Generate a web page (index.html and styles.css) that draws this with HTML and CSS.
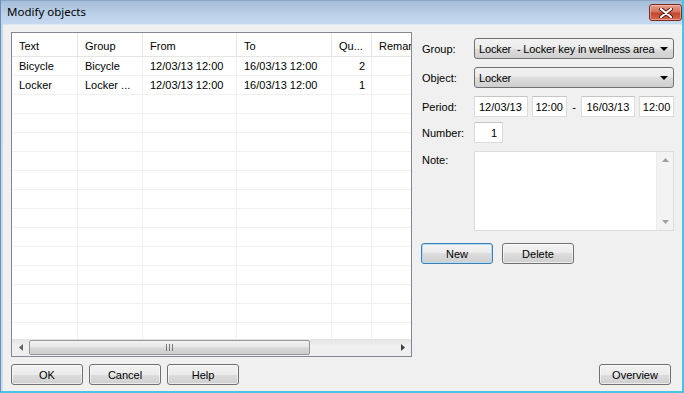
FILE: index.html
```html
<!DOCTYPE html>
<html lang="en">
<head>
    <meta charset="UTF-8">
    <title>Modify objects</title>
    <link rel="stylesheet" href="styles.css">
</head>
<body>
    <div class="window">
        <div class="titlebar">
            <span class="title">Modify objects</span>
            <div class="close-btn">
                <svg width="14" height="10" viewBox="0 0 14 10">
                    <path d="M2 1 L12 9 M12 1 L2 9" stroke="#5a1a10" stroke-width="4" stroke-linecap="round"/>
                    <path d="M2 1 L12 9 M12 1 L2 9" stroke="#ffffff" stroke-width="2.2" stroke-linecap="round"/>
                </svg>
            </div>
        </div>

        <div class="client">
            <div class="main">
                <!-- list of booked objects -->
                <div class="listview">
                    <div class="lv-body">
                        <div class="lv-row lv-head">
                            <div class="cell">Text</div>
                            <div class="cell">Group</div>
                            <div class="cell">From</div>
                            <div class="cell">To</div>
                            <div class="cell">Qu...</div>
                            <div class="cell">Remar</div>
                        </div>
                        <div class="lv-row">
                            <div class="cell">Bicycle</div>
                            <div class="cell">Bicycle</div>
                            <div class="cell">12/03/13 12:00</div>
                            <div class="cell">16/03/13 12:00</div>
                            <div class="cell num">2</div>
                            <div class="cell"></div>
                        </div>
                        <div class="lv-row">
                            <div class="cell">Locker</div>
                            <div class="cell">Locker ...</div>
                            <div class="cell">12/03/13 12:00</div>
                            <div class="cell">16/03/13 12:00</div>
                            <div class="cell num">1</div>
                            <div class="cell"></div>
                        </div>
                        <div class="lv-row"><div class="cell"></div><div class="cell"></div><div class="cell"></div><div class="cell"></div><div class="cell"></div><div class="cell"></div></div>
                        <div class="lv-row"><div class="cell"></div><div class="cell"></div><div class="cell"></div><div class="cell"></div><div class="cell"></div><div class="cell"></div></div>
                        <div class="lv-row"><div class="cell"></div><div class="cell"></div><div class="cell"></div><div class="cell"></div><div class="cell"></div><div class="cell"></div></div>
                        <div class="lv-row"><div class="cell"></div><div class="cell"></div><div class="cell"></div><div class="cell"></div><div class="cell"></div><div class="cell"></div></div>
                        <div class="lv-row"><div class="cell"></div><div class="cell"></div><div class="cell"></div><div class="cell"></div><div class="cell"></div><div class="cell"></div></div>
                        <div class="lv-row"><div class="cell"></div><div class="cell"></div><div class="cell"></div><div class="cell"></div><div class="cell"></div><div class="cell"></div></div>
                        <div class="lv-row"><div class="cell"></div><div class="cell"></div><div class="cell"></div><div class="cell"></div><div class="cell"></div><div class="cell"></div></div>
                        <div class="lv-row"><div class="cell"></div><div class="cell"></div><div class="cell"></div><div class="cell"></div><div class="cell"></div><div class="cell"></div></div>
                        <div class="lv-row"><div class="cell"></div><div class="cell"></div><div class="cell"></div><div class="cell"></div><div class="cell"></div><div class="cell"></div></div>
                        <div class="lv-row"><div class="cell"></div><div class="cell"></div><div class="cell"></div><div class="cell"></div><div class="cell"></div><div class="cell"></div></div>
                        <div class="lv-row"><div class="cell"></div><div class="cell"></div><div class="cell"></div><div class="cell"></div><div class="cell"></div><div class="cell"></div></div>
                        <div class="lv-row"><div class="cell"></div><div class="cell"></div><div class="cell"></div><div class="cell"></div><div class="cell"></div><div class="cell"></div></div>
                        <div class="lv-row"><div class="cell"></div><div class="cell"></div><div class="cell"></div><div class="cell"></div><div class="cell"></div><div class="cell"></div></div>
                    </div>
                    <div class="hscroll">
                        <div class="sb-arrow">
                            <svg width="4" height="7" viewBox="0 0 4 7"><path d="M4 0 L0 3.5 L4 7 Z" fill="#606060"/></svg>
                        </div>
                        <div class="sb-track">
                            <div class="sb-thumb">
                                <svg width="7" height="7" viewBox="0 0 7 7"><path d="M0.5 0 V7 M3.5 0 V7 M6.5 0 V7" stroke="#777" stroke-width="1"/></svg>
                            </div>
                        </div>
                        <div class="sb-arrow">
                            <svg width="4" height="7" viewBox="0 0 4 7"><path d="M0 0 L4 3.5 L0 7 Z" fill="#404040"/></svg>
                        </div>
                    </div>
                </div>

                <!-- edit panel -->
                <div class="panel">
                    <div class="field-row">
                        <span class="label">Group:</span>
                        <div class="combo">
                            <span class="combo-text">Locker &nbsp;- Locker key in wellness area</span>
                            <span class="combo-arrow"></span>
                        </div>
                    </div>
                    <div class="field-row">
                        <span class="label">Object:</span>
                        <div class="combo">
                            <span class="combo-text">Locker</span>
                            <span class="combo-arrow"></span>
                        </div>
                    </div>
                    <div class="field-row">
                        <span class="label">Period:</span>
                        <div class="textbox date">12/03/13</div>
                        <div class="textbox time">12:00</div>
                        <span class="dash">-</span>
                        <div class="textbox date">16/03/13</div>
                        <div class="textbox time">12:00</div>
                    </div>
                    <div class="field-row tight">
                        <span class="label">Number:</span>
                        <div class="textbox number">1</div>
                    </div>
                    <div class="field-row note-row">
                        <span class="label">Note:</span>
                        <div class="note">
                            <div class="note-text"></div>
                            <div class="vscroll">
                                <svg width="7" height="4" viewBox="0 0 7 4"><path d="M0 4 L3.5 0 L7 4 Z" fill="#a0a0a0"/></svg>
                                <svg width="7" height="4" viewBox="0 0 7 4"><path d="M0 0 L3.5 4 L7 0 Z" fill="#a0a0a0"/></svg>
                            </div>
                        </div>
                    </div>
                    <div class="panel-buttons">
                        <button class="btn btn-default">New</button>
                        <button class="btn">Delete</button>
                    </div>
                </div>
            </div>

            <div class="footer">
                <button class="btn">OK</button>
                <button class="btn">Cancel</button>
                <button class="btn">Help</button>
                <span class="spacer"></span>
                <button class="btn">Overview</button>
            </div>
        </div>
    </div>
</body>
</html>
```

FILE: styles.css
```css
html, body {
    margin: 0;
    padding: 0;
}
body {
    width: 684px;
    height: 393px;
    overflow: hidden;
    font-family: "Liberation Sans", Arial, sans-serif;
    font-size: 11px;
    color: #000000;
    background: #ffffff;
}
.window {
    height: 393px;
    display: flex;
    flex-direction: column;
    background: linear-gradient(to bottom, #c4d8ee, #c9dcf0);
    border-left: 1px solid #6d8fb5;
    border-right: 2px solid #4cc3e4;
    border-bottom: 2px solid #48c6e8;
    box-sizing: border-box;
}
.titlebar {
    height: 24px;
    flex: none;
    display: flex;
    align-items: flex-start;
    justify-content: space-between;
    background: linear-gradient(to bottom, #a6bdd8, #bcd2ea 60%, #c5d9ef);
    border-top: 1px solid #8aa6c6;
    box-sizing: border-box;
}
.title {
    font-family: "Noto Sans", "Open Sans", sans-serif;
    font-size: 11.5px;
    padding: 3px 0 0 6px;
    color: #000000;
}
.close-btn {
    width: 33px;
    height: 17px;
    margin: 3px 0 0 0;
    box-sizing: border-box;
    border: 1px solid #7a2a1e;
    border-radius: 3px;
    background: linear-gradient(to bottom, #e8a08f, #d4735f 45%, #c2472e 55%, #d06a4f);
    display: flex;
    align-items: center;
    justify-content: center;
    box-shadow: inset 0 0 0 1px rgba(255, 210, 200, 0.5);
}
.client {
    flex: 1;
    background: #f0f0f0;
    margin-left: 2px;
    padding: 7px 0 0 8px;
    display: flex;
    flex-direction: column;
    border-top: 1px solid #dfe6ee;
}

/* ---- list view ---- */
.main {
    display: flex;
    align-items: flex-start;
}
.listview {
    width: 401px;
    height: 325px;
    box-sizing: border-box;
    border: 1px solid #828790;
    background: #ffffff;
    display: flex;
    flex-direction: column;
}
.lv-body {
    flex: 1;
    overflow: hidden;
}
.lv-row {
    display: grid;
    grid-template-columns: 66px 65px 94px 95px 40px 60px;
    height: 19px;
    border-bottom: 1px solid #f0f0f0;
    box-sizing: border-box;
}
.lv-head {
    height: 24px;
    border-bottom: 1px solid #e5e5e5;
}
.cell {
    border-right: 1px solid #f0f0f0;
    padding: 0 0 0 7px;
    display: flex;
    align-items: center;
    white-space: nowrap;
    overflow: hidden;
}
.lv-head .cell {
    border-right: 1px solid #e5e5e5;
    padding-top: 2px;
}
.cell.num {
    justify-content: flex-end;
    padding-right: 6px;
}
.hscroll {
    height: 17px;
    flex: none;
    display: flex;
    align-items: stretch;
    background: linear-gradient(to bottom, #e3e3e3, #f0f0f0 40%, #eeeeee);
}
.sb-arrow {
    width: 17px;
    display: flex;
    align-items: center;
    justify-content: center;
}
.sb-track {
    flex: 1;
    display: flex;
    padding: 1px 0;
}
.sb-thumb {
    width: 281px;
    box-sizing: border-box;
    border: 1px solid #979797;
    border-radius: 2px;
    background: linear-gradient(to bottom, #f3f3f3, #e6e6e6 45%, #d7d7d7 55%, #cdcdcd);
    display: flex;
    align-items: center;
    justify-content: center;
}

/* ---- edit panel ---- */
.panel {
    width: 253px;
    margin-left: 9px;
    padding-top: 6px;
    display: flex;
    flex-direction: column;
    gap: 8px;
}
.field-row {
    display: flex;
    align-items: center;
    height: 21px;
}
.field-row.tight {
    margin-top: -3px;
}
.label {
    width: 52px;
    flex: none;
    padding-left: 1px;
}
.combo {
    flex: 1;
    height: 21px;
    box-sizing: border-box;
    border: 1px solid #707070;
    border-radius: 3px;
    background: linear-gradient(to bottom, #f2f2f2, #ebebeb 50%, #dddddd 50%, #cfcfcf);
    display: flex;
    align-items: center;
    gap: 4px;
    padding: 0 5px 0 4px;
    white-space: nowrap;
    overflow: hidden;
}
.combo-text {
    flex: 1;
    overflow: hidden;
    letter-spacing: -0.15px;
}
.combo-arrow {
    width: 0;
    height: 0;
    border-left: 4px solid transparent;
    border-right: 4px solid transparent;
    border-top: 4px solid #000000;
    flex: none;
}
.textbox {
    height: 21px;
    box-sizing: border-box;
    border: 1px solid #dcdcdc;
    border-top-color: #c5c5c5;
    background: #ffffff;
    display: flex;
    align-items: center;
    padding: 0 3px 0 4px;
}
.textbox.date {
    width: 54px;
}
.textbox.time {
    width: 35px;
    margin-left: 4px;
    padding: 0;
    justify-content: center;
}
.dash {
    width: 15px;
    text-align: center;
}
.textbox.number {
    width: 29px;
    justify-content: flex-end;
    padding-right: 5px;
}
.note-row {
    height: 80px;
    align-items: flex-start;
}
.note-row .label {
    padding-top: 3px;
}
.note {
    flex: 1;
    height: 80px;
    box-sizing: border-box;
    border: 1px solid #dcdcdc;
    background: #ffffff;
    display: flex;
}
.note-text {
    flex: 1;
}
.vscroll {
    width: 16px;
    background: #f3f3f3;
    border-left: 1px solid #ececec;
    display: flex;
    flex-direction: column;
    align-items: center;
    justify-content: space-between;
    padding: 6px 0 6px;
}
.panel-buttons {
    display: flex;
    gap: 9px;
    margin-top: 4px;
}

/* ---- buttons ---- */
.btn {
    width: 72px;
    height: 21px;
    box-sizing: border-box;
    border: 1px solid #707070;
    border-radius: 3px;
    background: linear-gradient(to bottom, #f2f2f2, #ebebeb 50%, #dddddd 50%, #cfcfcf);
    font-family: "Liberation Sans", Arial, sans-serif;
    font-size: 11px;
    color: #000000;
    padding: 0;
    box-shadow: inset 0 0 0 1px rgba(255, 255, 255, 0.6);
}
.btn-default {
    border-color: #3c7fb1;
    box-shadow: inset 0 0 0 1px #b5dcf3;
}
.footer {
    display: flex;
    gap: 6px;
    margin-top: 7px;
    padding-right: 11px;
}
.spacer {
    flex: 1;
}
```
